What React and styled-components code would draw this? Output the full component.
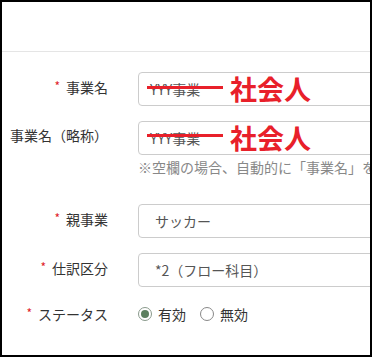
import React from "react";
import styled, { createGlobalStyle } from "styled-components";

const GlobalStyle = createGlobalStyle`
  html, body { margin: 0; padding: 0; background: #fff; }
  body { font-family: "Noto Sans CJK JP", "Noto Sans", sans-serif; }
  * { box-sizing: border-box; }
`;

const Frame = styled.div`
  width: 372px;
  height: 357px;
  border: 2px solid #000;
  overflow: hidden;
  background: #fff;
`;

const Header = styled.div`
  height: 50px;
  border-bottom: 1px solid #e5e5e5;
`;

const Form = styled.div`
  padding-top: 20px;
`;

const Row = styled.div`
  display: grid;
  grid-template-columns: 106px 260px;
  column-gap: 30px;
  align-items: ${(p) => (p.$center ? "center" : "start")};
  margin-bottom: ${(p) => p.$gap || 15}px;
  min-height: ${(p) => (p.$center ? 20 : 34)}px;
`;

const Label = styled.div`
  text-align: right;
  font-size: 14px;
  line-height: 20px;
  color: #333;
  white-space: nowrap;
  padding-top: ${(p) => (p.$center ? 0 : 4)}px;
`;

const Req = styled.span`
  color: #e0202a;
  font-size: 12px;
  margin-right: 6px;
  vertical-align: 2px;
`;

const Field = styled.div`
  display: flex;
  flex-direction: column;
  min-width: 0;
`;

const InputBox = styled.div`
  position: relative;
  height: 34px;
  width: 260px;
  border: 1px solid #ccc;
  border-radius: 4px;
  display: flex;
  align-items: center;
  padding-left: ${(p) => p.$pad || 11}px;
  font-size: 14px;
  color: #555;
  white-space: nowrap;
`;

const Annotation = styled.div`
  position: absolute;
  left: 8px;
  top: 0;
  bottom: 0;
  display: flex;
  align-items: center;
`;

const StrikeLine = styled.div`
  width: 76px;
  height: 3px;
  background: #e8202a;
  margin-top: ${(p) => p.$dy || 0}px;
`;

const RedText = styled.span`
  margin-left: 7px;
  font-size: 27px;
  font-weight: 700;
  color: #e8202a;
  line-height: 30px;
`;

const Help = styled.div`
  margin-top: 2px;
  width: 232px;
  overflow: hidden;
  font-size: 14px;
  line-height: 20px;
  color: #888;
  white-space: nowrap;
`;

const RadioGroup = styled.div`
  display: flex;
  align-items: center;
  gap: 14px;
`;

const RadioItem = styled.label`
  display: flex;
  align-items: center;
  font-size: 14px;
  line-height: 20px;
  color: #333;
`;

const RadioCircle = styled.span`
  width: 14px;
  height: 14px;
  border-radius: 50%;
  border: 1px solid ${(p) => (p.$checked ? "#8a9a8c" : "#888")};
  margin-right: 6px;
  display: flex;
  align-items: center;
  justify-content: center;
  &::after {
    content: "";
    width: 8px;
    height: 8px;
    border-radius: 50%;
    background: ${(p) => (p.$checked ? "#5b7f5e" : "transparent")};
  }
`;

function AnnotatedInput({ value, dy }) {
  return (
    <InputBox>
      {value}
      <Annotation>
        <StrikeLine $dy={dy} />
        <RedText>社会人</RedText>
      </Annotation>
    </InputBox>
  );
}

export default function App() {
  return (
    <>
      <GlobalStyle />
      <Frame>
        <Header />
        <Form>
          <Row>
            <Label>
              <Req>*</Req>事業名
            </Label>
            <AnnotatedInput value="YYY事業" dy={-3} />
          </Row>
          <Row $gap={27}>
            <Label>事業名（略称）</Label>
            <Field>
              <AnnotatedInput value="YYY事業" dy={-5} />
              <Help>※空欄の場合、自動的に「事業名」を</Help>
            </Field>
          </Row>
          <Row>
            <Label>
              <Req>*</Req>親事業
            </Label>
            <InputBox $pad={16}>サッカー</InputBox>
          </Row>
          <Row $gap={16}>
            <Label>
              <Req>*</Req>仕訳区分
            </Label>
            <InputBox $pad={16}>*2（フロー科目）</InputBox>
          </Row>
          <Row $center>
            <Label $center>
              <Req>*</Req>ステータス
            </Label>
            <RadioGroup>
              <RadioItem>
                <RadioCircle $checked />
                有効
              </RadioItem>
              <RadioItem>
                <RadioCircle />
                無効
              </RadioItem>
            </RadioGroup>
          </Row>
        </Form>
      </Frame>
    </>
  );
}
